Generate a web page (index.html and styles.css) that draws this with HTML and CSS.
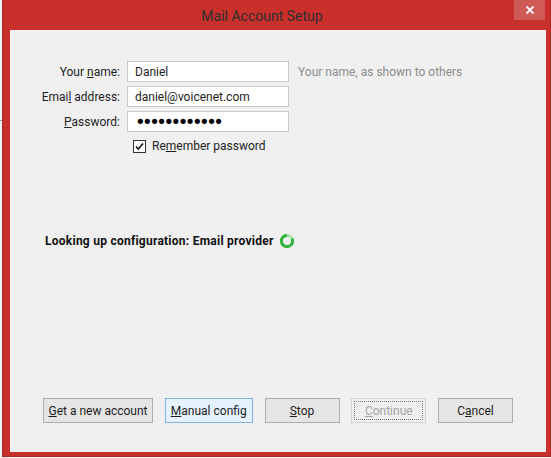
FILE: index.html
```html
<!DOCTYPE html>
<html>
<head>
<meta charset="utf-8">
<link rel="stylesheet" href="styles.css">
</head>
<body>
<div class="desk-line"></div>
<div class="window">
  <div class="titlebar">
    <div class="title">Mail Account Setup</div>
    <div class="close">
      <svg width="10" height="10" viewBox="0 0 10 10"><path d="M1.5 1.5 L8.5 8.5 M8.5 1.5 L1.5 8.5" stroke="#fff" stroke-width="1.8" fill="none"/></svg>
    </div>
  </div>
  <div class="content">
    <div class="form">
      <label class="lbl">Your <u>n</u>ame:</label>
      <input class="field" type="text" value="Daniel">
      <span class="hint">Your name, as shown to others</span>

      <label class="lbl">Emai<u>l</u> address:</label>
      <input class="field" type="text" value="daniel@voicenet.com">
      <span></span>

      <label class="lbl"><u>P</u>assword:</label>
      <input class="field pw" type="password" value="aaaaaaaaaaaa">
      <span></span>

      <span></span>
      <div class="remember">
        <span class="check"><svg width="11" height="11" viewBox="0 0 11 11"><path d="M2 5.5 L4.3 8 L9 2.5" stroke="#111" stroke-width="1.6" fill="none"/></svg></span>
        <span>Re<u>m</u>ember password</span>
      </div>
      <span></span>
    </div>

    <div class="status">
      <span>Looking up configuration: Email provider</span>
      <svg class="spinner" width="16" height="16" viewBox="0 0 16 16">
        <circle cx="8" cy="8" r="5.6" stroke="#a9e2ab" stroke-width="3" fill="none"/>
        <path d="M8 2.4 A5.6 5.6 0 1 0 13.1 5.7" stroke="#34b53c" stroke-width="3" fill="none"/>
      </svg>
    </div>

    <div class="buttons">
      <button class="btn w110"><u>G</u>et a new account</button>
      <button class="btn w88 hot"><u>M</u>anual config</button>
      <button class="btn w75"><u>S</u>top</button>
      <button class="btn w75 disabled"><span class="focus"><u>C</u>ontinue</span></button>
      <button class="btn w75">C<u>a</u>ncel</button>
    </div>
  </div>
</div>
</body>
</html>
```
FILE: styles.css
```css
html, body {
  margin: 0;
  padding: 0;
}
body {
  width: 551px;
  height: 458px;
  background: #f4f4f4;
  position: relative;
  overflow: hidden;
  font-family: Roboto, "Noto Sans", sans-serif;
  font-size: 12px;
  color: #1e1e1e;
}
.desk-line {
  position: absolute;
  left: 0;
  top: 120px;
  width: 2px;
  height: 1px;
  background: #a0a0a0;
}
.window {
  margin-left: 2px;
  width: 549px;
  height: 457px;
  box-sizing: border-box;
  background: #c9302c;
  border: 1px solid #a82a26;
  border-top: none;
  padding: 0 4px 4px 7px;
  display: flex;
  flex-direction: column;
}
.titlebar {
  height: 30px;
  display: flex;
  align-items: flex-start;
}
.title {
  flex: 1;
  text-align: center;
  font-size: 14px;
  line-height: 20px;
  padding-top: 6px;
  color: #2e2e2e;
}
.close {
  width: 31px;
  height: 20px;
  margin-right: 1px;
  background: #d05a56;
  display: flex;
  align-items: center;
  justify-content: center;
}
.content {
  flex: 1;
  background: #f0f0f0;
  display: flex;
  flex-direction: column;
}
.form {
  margin-top: 31px;
  display: grid;
  grid-template-columns: 110px 162px auto;
  column-gap: 7px;
  row-gap: 4px;
  align-items: center;
}
.lbl {
  text-align: right;
}
.field {
  box-sizing: border-box;
  width: 162px;
  height: 21px;
  margin: 0;
  border: 1px solid #c9c9c9;
  background: #fff;
  padding: 0 7px;
  font-family: inherit;
  font-size: 12px;
  color: #1e1e1e;
  outline: none;
}
.pw {
  font-family: "DejaVu Sans", sans-serif;
  font-size: 18px;
  letter-spacing: -3.5px;
  color: #000;
}
.hint {
  margin-left: 2px;
  color: #8d8d8d;
}
.remember {
  display: flex;
  align-items: center;
  gap: 6px;
  margin-top: 3px;
  padding-left: 6px;
}
.check {
  box-sizing: border-box;
  width: 13px;
  height: 13px;
  border: 1px solid #333;
  background: #fff;
  display: flex;
  align-items: center;
  justify-content: center;
}
.status {
  margin-top: 80px;
  padding-left: 35px;
  display: flex;
  align-items: center;
  gap: 5px;
  font-weight: bold;
  letter-spacing: 0.25px;
  color: #111;
}
.spinner {
  display: block;
}
.buttons {
  margin-top: auto;
  margin-bottom: 29px;
  padding: 0 33px;
  display: flex;
  justify-content: space-between;
}
.btn {
  box-sizing: border-box;
  height: 25px;
  margin: 0;
  padding: 0;
  border: 1px solid #adadad;
  background: #e5e5e5;
  font-family: inherit;
  font-size: 12px;
  color: #1e1e1e;
}
.w110 { width: 110px; }
.w88 { width: 88px; }
.w75 { width: 75px; }
.hot {
  background: #e5f1fb;
  border-color: #7eb4ea;
}
.disabled {
  background: #efefef;
  border-color: #d4d4d4;
  color: #a3a3a3;
  padding: 2px;
}
.focus {
  display: flex;
  align-items: center;
  justify-content: center;
  height: 100%;
  border: 1px dotted #777;
  box-sizing: border-box;
}
```
